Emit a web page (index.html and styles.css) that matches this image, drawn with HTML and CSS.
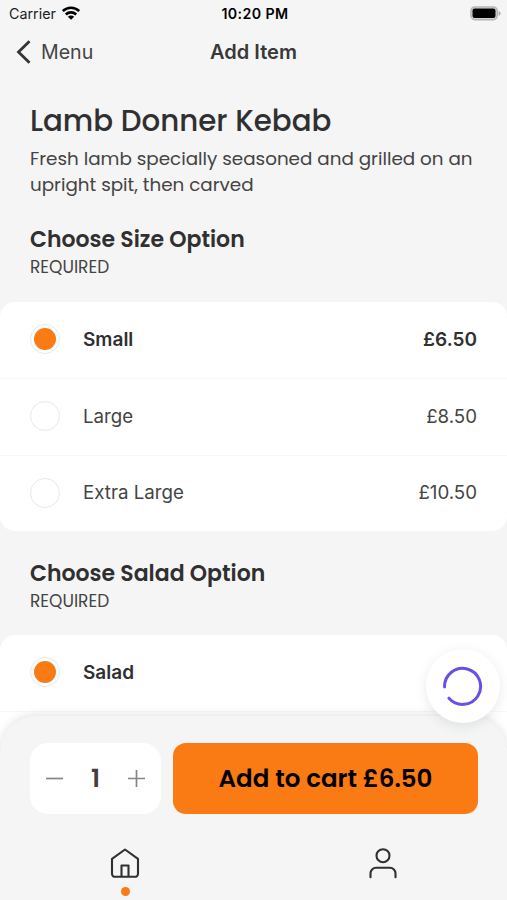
FILE: index.html
```html
<!DOCTYPE html>
<html lang="en">
<head>
<meta charset="utf-8">
<title>Add Item</title>
<link rel="stylesheet" href="styles.css">
</head>
<body>
<div class="screen">
  <div class="status">
    <div class="carrier"><span>Carrier</span>
      <svg width="18" height="14" viewBox="0 0 18 14" fill="none" stroke="#000" stroke-width="2.6"><path d="M.8 5.1C5.4.6 12.6.6 17.2 5.1M3.8 8.5c2.9-2.8 7.5-2.8 10.4 0"/><path d="M9 13.8 5.8 10.8c1.8-1.6 4.6-1.6 6.4 0z" fill="#000" stroke="none"/></svg>
    </div>
    <div class="time">10:20 PM</div>
    <svg class="battery" width="31" height="15" viewBox="0 0 31 15"><rect x="1" y="1" width="26.2" height="12.6" rx="4" fill="#ddd" stroke="#b5b5b5" stroke-width="1.6"/><rect x="2.5" y="2.5" width="23" height="9.5" rx="2" fill="#000"/><path d="M28.6 4.7q2 1 2 2.6t-2 2.6z" fill="#aaa"/></svg>
  </div>
  <header class="nav">
    <div class="back"><svg width="16" height="24" viewBox="0 0 16 24" fill="none" stroke="#353535" stroke-width="2.8"><path d="M13.5 1.2 2.5 12l11 10.8"/></svg><span>Menu</span></div>
    <div class="nav-title">Add Item</div>
  </header>
  <main class="content">
    <section class="intro">
      <h1>Lamb Donner Kebab</h1>
      <p>Fresh lamb specially seasoned and grilled on an<br>upright spit, then carved</p>
    </section>
    <div class="heading"><h2>Choose Size Option</h2><small>REQUIRED</small></div>
    <div class="card">
      <div class="row chosen"><i class="radio"></i><span class="name">Small</span><span class="price">£6.50</span></div>
      <div class="row"><i class="radio"></i><span class="name">Large</span><span class="price">£8.50</span></div>
      <div class="row"><i class="radio"></i><span class="name">Extra Large</span><span class="price">£10.50</span></div>
    </div>
    <div class="heading second"><h2>Choose Salad Option</h2><small>REQUIRED</small></div>
    <div class="card">
      <div class="row chosen"><i class="radio"></i><span class="name">Salad</span></div>
      <div class="row"></div>
    </div>
  </main>
  <footer class="dock">
    <div class="actions">
      <div class="stepper">
        <svg width="17" height="17" viewBox="0 0 17 17" stroke="#858585" stroke-width="1.7"><path d="M0 8.5h17"/></svg>
        <span>1</span>
        <svg width="17" height="17" viewBox="0 0 17 17" stroke="#858585" stroke-width="1.7"><path d="M0 8.5h17M8.5 0v17"/></svg>
      </div>
      <button class="cart">Add to cart £6.50</button>
    </div>
    <nav class="tabs">
      <div class="tab"><svg width="30" height="32" viewBox="0 0 30 32" fill="none" stroke="#303033" stroke-width="2.1" stroke-linejoin="round"><path d="M2 11.8 15 2.5l13 9.3v15a3 3 0 0 1-3 3H5a3 3 0 0 1-3-3zM11.5 29.5V18.5h7v11"/></svg><i class="dot"></i></div>
      <div class="tab user"><svg width="30" height="32" viewBox="0 0 30 32" fill="none" stroke="#303033" stroke-width="2.1" stroke-linecap="round"><circle cx="15" cy="8.7" r="6.5"/><path d="M2.5 30.3v-4a5.5 5.5 0 0 1 5.5-5.5h14a5.5 5.5 0 0 1 5.5 5.5v4"/></svg></div>
    </nav>
  </footer>
  <div class="bubble"><svg width="42" height="42" viewBox="0 0 42 42" fill="none" stroke="#6550e8" stroke-width="3" stroke-linecap="round"><path d="M2.6 22A18 18 0 1 1 7 33.2"/></svg></div>
</div>
</body>
</html>
```
FILE: styles.css
```css
* { box-sizing: border-box; }
body { margin: 0; }
.screen { position: relative; width: 507px; height: 900px; overflow: hidden; display: flex; flex-direction: column; background: #f5f5f5; color: #303030; font-family: Poppins, Inter, "Liberation Sans", sans-serif; }
.status { flex: none; height: 27px; display: grid; grid-template-columns: 1fr auto 1fr; align-items: center; padding: 0 6px 0 9px; font: 14.3px/27px Inter, sans-serif; color: #1c1c1c; }
.carrier { display: flex; align-items: center; gap: 6px; }
.carrier svg { margin-top: -2px; }
.time { font-size: 14.2px; font-weight: 600; color: #000; letter-spacing: .4px; }
.battery { justify-self: end; }
.nav { flex: none; height: 51px; display: grid; grid-template-columns: 1fr auto 1fr; align-items: center; padding: 0 16px 1px; font-family: Inter, sans-serif; font-size: 20px; }
.back { display: flex; align-items: center; gap: 9px; font-size: 19.6px; color: #444; }
.nav-title { font-weight: 600; color: #383838; }
.content { flex: none; height: 668px; overflow: hidden; }
.intro { padding: 23px 30px 0; }
h1, h2, p { margin: 0; white-space: nowrap; }
h1 { font-size: 29.3px; line-height: 40px; font-weight: 500; }
p { margin-top: 5px; font-size: 18.33px; line-height: 25.5px; color: #444; }
.heading { padding: 27px 30px 0; height: 105px; }
h2 { font-size: 22px; line-height: 32px; font-weight: 600; }
small { display: block; font-size: 17px; line-height: 23px; color: #444; }
.heading.second { height: 104px; padding-top: 27px; }
.card { background: #fff; border-radius: 15px; }
.row { height: 77px; display: flex; align-items: center; padding: 0 30px 2px; border-bottom: 1px solid #f8f8f8; font-family: Inter, sans-serif; font-size: 18.7px; color: #444; }
.row:last-child { height: 75px; border-bottom: 0; }
.radio { width: 30px; height: 30px; border: 1.5px solid #e8e8e8; border-radius: 50%; margin-right: 23px; padding: 3px; }
.chosen { font-size: 19px; font-weight: 600; color: #303030; }
.chosen .radio { background: #fa7a14 content-box; }
.price { margin-left: auto; }
.dock { flex: none; height: 184px; background: #f5f5f5; border-radius: 36px 36px 0 0; box-shadow: 0 -2px 8px rgba(0,0,0,.1); position: relative; margin-top: -30px; }
.actions { display: flex; gap: 12px; padding: 27px 29px 0 30px; }
.stepper { width: 131px; height: 71px; display: flex; align-items: center; justify-content: space-between; padding: 0 16px; border-radius: 18px; background: #fff; font-size: 25px; font-weight: 600; color: #404040; }
.cart { flex: 1; height: 71px; border: 0; border-radius: 13px; background: #fa7a14; color: #000; font: 600 24.5px Poppins, Inter, sans-serif; padding: 0; white-space: nowrap; }
.tabs { display: flex; justify-content: space-between; padding: 33px 109px 0 110px; }
.tab { display: flex; flex-direction: column; align-items: center; }
.dot { width: 9px; height: 9px; border-radius: 50%; background: #fa7a14; margin-top: 8px; }
.bubble { position: absolute; left: 426px; top: 649px; width: 74px; height: 74px; border-radius: 50%; background: #fff; box-shadow: 0 3px 12px rgba(60,70,90,.12); display: flex; align-items: center; justify-content: center; }
```
